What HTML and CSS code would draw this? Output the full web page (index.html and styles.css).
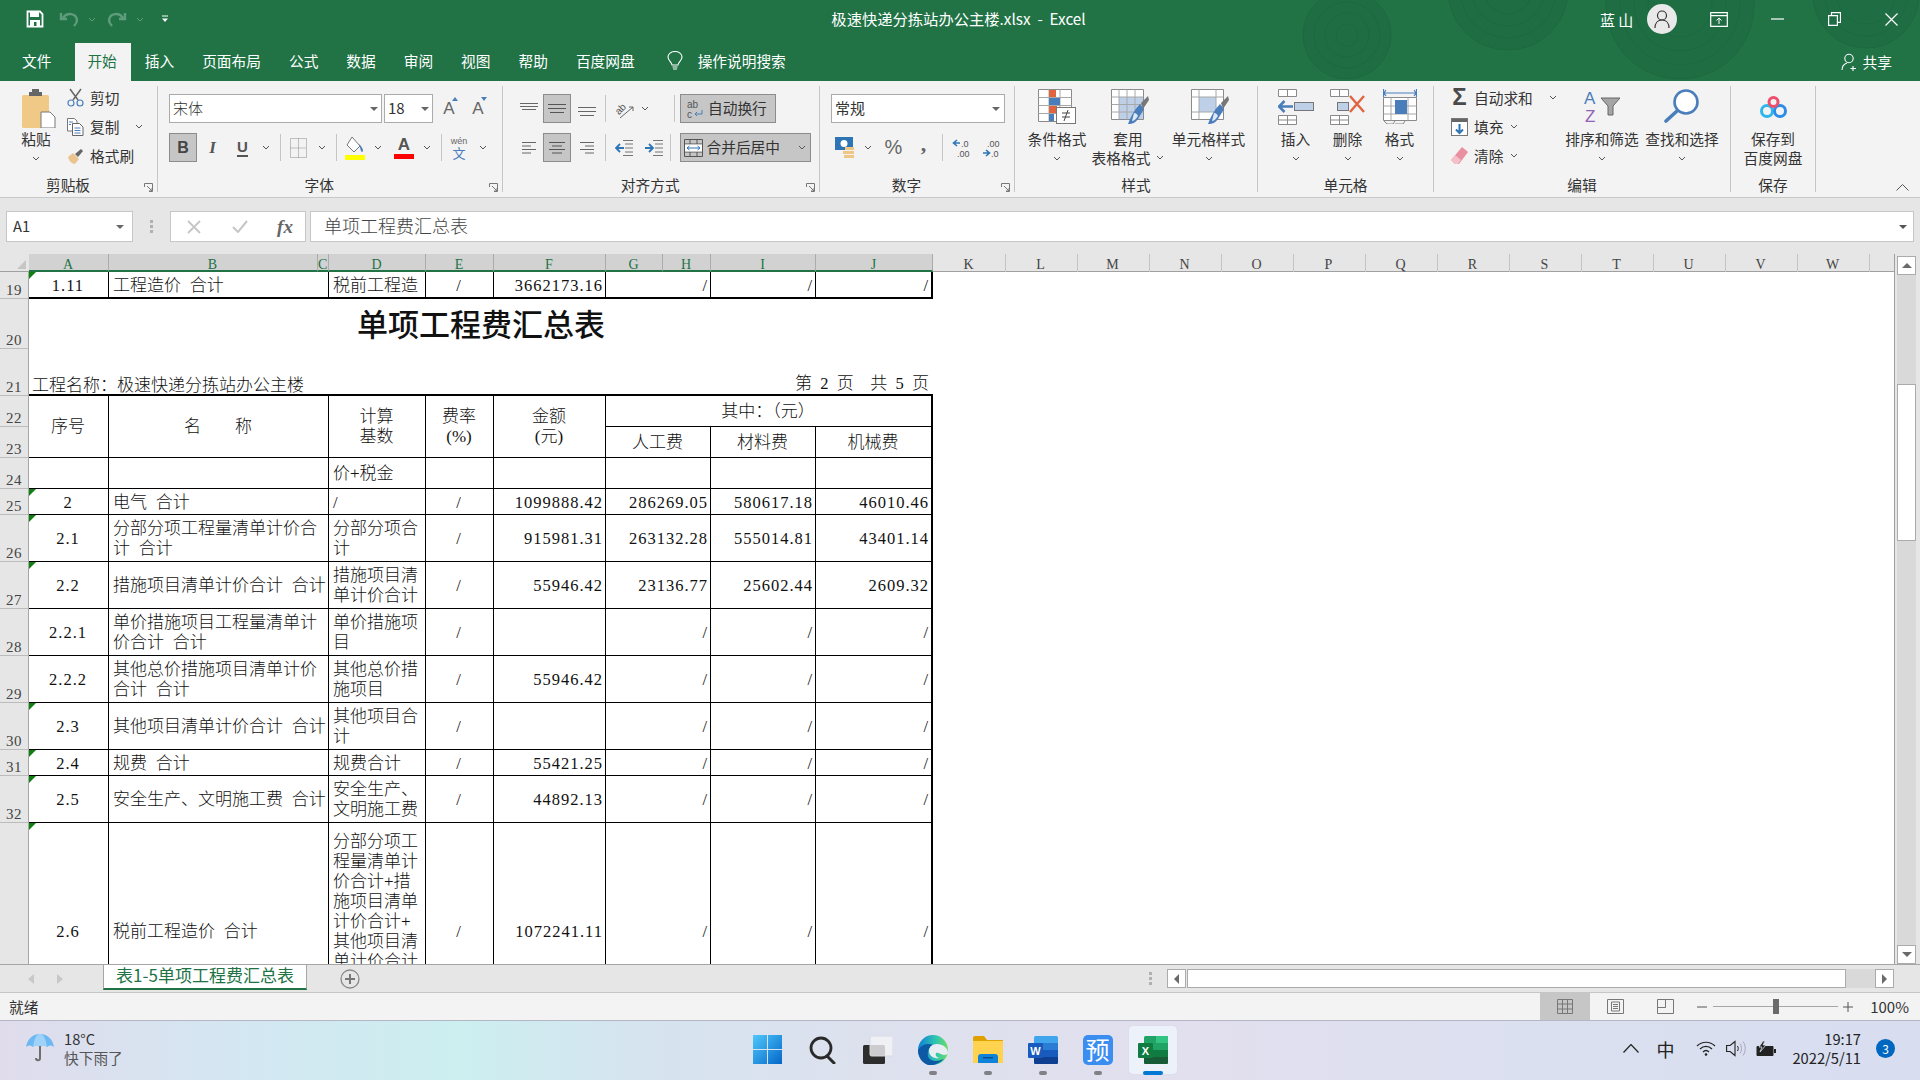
FILE: index.html
```html
<!DOCTYPE html>
<html lang="zh-CN">
<head>
<meta charset="utf-8">
<title>极速快递分拣站办公主楼.xlsx - Excel</title>
<link rel="stylesheet" href="styles.css">
</head>
<body>
<div class="app">
  <header class="head">
    <svg class="rings" viewBox="0 0 640 81" width="640" height="81">
      <g fill="#1f6e43" stroke="#1d6840">
        <circle cx="67" cy="35" r="44"/><circle cx="67" cy="35" r="33" fill="none"/><circle cx="67" cy="35" r="22" fill="none"/><circle cx="67" cy="35" r="11" fill="none"/>
        <circle cx="228" cy="-10" r="60"/><circle cx="228" cy="-10" r="48" fill="none"/><circle cx="228" cy="-10" r="36" fill="none"/><circle cx="228" cy="-10" r="24" fill="none"/>
        <circle cx="400" cy="5" r="74"/><circle cx="400" cy="5" r="60" fill="none"/><circle cx="400" cy="5" r="46" fill="none"/><circle cx="400" cy="5" r="32" fill="none"/>
        <circle cx="586" cy="-5" r="53"/><circle cx="586" cy="-5" r="41" fill="none"/><circle cx="586" cy="-5" r="29" fill="none"/>
      </g>
    </svg>
    <div class="titlebar">
      <div class="qat">
        <svg width="18" height="18" viewBox="0 0 18 18"><path d="M1.500 1.500h12.500l2.500 2.500v12.500h-15z" fill="none" stroke="#fff" stroke-width="1.800"/><rect x="4" y="2" width="9" height="5" fill="#fff"/><rect x="4" y="10" width="10" height="6" fill="#fff"/><rect x="8" y="12" width="2.500" height="4" fill="#217346"/></svg>
        <svg width="20" height="16" viewBox="0 0 20 16"><path d="M4 7c4-6 13-5 14 2 0 2-1 4-3 6M2 2v6h6" fill="none" stroke="#5e9c7c" stroke-width="2.400"/></svg>
        <svg class="chev dim" viewBox="0 0 8 5"><path d="M1 1l3 3 3-3"/></svg>
        <svg width="20" height="16" viewBox="0 0 20 16"><path d="M16 7C12 1 3 2 2 9c0 2 1 4 3 6M18 2v6h-6" fill="none" stroke="#5e9c7c" stroke-width="2.400"/></svg>
        <svg class="chev dim" viewBox="0 0 8 5"><path d="M1 1l3 3 3-3"/></svg>
        <svg width="8" height="8" viewBox="0 0 8 8"><path d="M1 1h6" stroke="#fff" stroke-width="1"/><path d="M1 3.500h6L4 7z" fill="#fff"/></svg>
      </div>
      <div class="doc">极速快递分拣站办公主楼.xlsx&nbsp; - &nbsp;Excel</div>
      <div class="winctl">
        <span class="user">蓝 山</span>
        <span class="avatar"><svg width="16" height="20" viewBox="0 0 16 20"><circle cx="8" cy="6.500" r="4.500" fill="none" stroke="#333" stroke-width="1.200"/><path d="M1 19c0-5 3-8 7-8s7 3 7 8" fill="none" stroke="#333" stroke-width="1.200"/></svg></span>
        <svg width="18" height="15" viewBox="0 0 18 15"><path d="M.7.700h16.600v13.600H.7zM.7 3.700h16.600" fill="none" stroke="#fff" stroke-width="1.200"/><path d="M9 12V6M6.500 8.500L9 6l2.500 2.500" fill="none" stroke="#fff"/></svg>
        <svg width="13" height="2" viewBox="0 0 13 2"><path d="M0 1h13" stroke="#fff" stroke-width="1.200"/></svg>
        <svg width="13" height="14" viewBox="0 0 13 14"><path d="M.6 3.600h8.800v9.800H.6zM3.500 3.600V.6h9v9.800H9.400" fill="none" stroke="#fff" stroke-width="1.200"/></svg>
        <svg width="13" height="13" viewBox="0 0 13 13"><path d="M.5.500l12 12M12.500.5l-12 12" stroke="#fff" stroke-width="1.200"/></svg>
      </div>
    </div>
    <nav class="tabs">
      <span class="tab file">文件</span>
      <span class="tab on">开始</span>
      <span class="tab">插入</span>
      <span class="tab">页面布局</span>
      <span class="tab">公式</span>
      <span class="tab">数据</span>
      <span class="tab">审阅</span>
      <span class="tab">视图</span>
      <span class="tab">帮助</span>
      <span class="tab">百度网盘</span>
      <span class="tell">
        <svg width="16" height="20" viewBox="0 0 16 20"><path d="M5 14c0-3-4-4-4-8a7 5.500 0 0 1 14 0c0 4-4 5-4 8z" fill="none" stroke="#fff" stroke-width="1.100"/><path d="M5.500 16h5M6 18h4" stroke="#fff" stroke-width="1.200"/></svg>
        操作说明搜索
      </span>
      <span class="share">
        <svg width="18" height="18" viewBox="0 0 18 18"><circle cx="8" cy="5.500" r="4.200" fill="none" stroke="#fff" stroke-width="1.100"/><path d="M1 17c0-4 2-6 5-7M12 13v5M9.500 15.500h5.500" fill="none" stroke="#fff" stroke-width="1.100"/></svg>
        共享
      </span>
    </nav>
  </header>

  <section class="ribbon">
    <div class="group g-clip launch">
      <div class="body">
        <div class="big paste">
          <div class="bi"><svg width="34" height="39" viewBox="0 0 34 39"><rect x="0" y="6" width="27" height="33" rx="1.500" fill="#f0c987"/><path d="M7 7h13V3h-3V0h-7v3H7z" fill="#666"/><path d="M19 23h9l5 5v11H19z" fill="#fff" stroke="#777"/></svg></div>
          <span>粘贴</span>
          <svg class="chev" viewBox="0 0 8 5"><path d="M1 1l3 3 3-3"/></svg>
        </div>
        <div class="smalls">
          <div class="sm"><svg width="17" height="19" viewBox="0 0 17 19"><path d="M3 1l8 11M14 1L6 12" stroke="#666" stroke-width="1.500" fill="none"/><circle cx="4" cy="15" r="3" fill="none" stroke="#4a7ebb" stroke-width="1.200"/><circle cx="13" cy="15" r="3" fill="none" stroke="#4a7ebb" stroke-width="1.200"/></svg><span>剪切</span></div>
          <div class="sm"><svg width="17" height="18" viewBox="0 0 17 18"><path d="M.5.500h7l2.500 2.500v10H.5z" fill="#fff" stroke="#777"/><path d="M5.500 5.500h7l3.500 3.500v8.500H5.500z" fill="#fff" stroke="#666"/><path d="M2 4h4M2 6.500h2M7.500 10h6M7.500 12.500h6M7.500 15h6" stroke="#4a7ebb"/></svg><span>复制</span><svg class="chev g1" viewBox="0 0 8 5"><path d="M1 1l3 3 3-3"/></svg></div>
          <div class="sm"><svg width="17" height="16" viewBox="0 0 17 16"><path d="M1 9l5-4 6 6-4 5c-3 0-6-3-7-7z" fill="#eac48c"/><path d="M8 6l6-5 2 2-5 6z" fill="#666"/></svg><span>格式刷</span></div>
        </div>
      </div>
      <div class="glabel">剪贴板</div>
      <svg class="launcher" viewBox="0 0 9 9"><path d="M.5 4V.5h8v8H5M3 3l5 5M5 8h3V5" fill="none" stroke="#777"/></svg>
    </div>

    <div class="group g-font launch">
      <div class="body rows">
        <div class="rowline">
          <div class="combo fontname"><span>宋体</span><i class="tri"></i></div>
          <div class="combo fontsize"><span>18</span><i class="tri"></i></div>
          <span class="grow up">A<i></i></span>
          <span class="grow down">A<i></i></span>
        </div>
        <div class="rowline fmt">
          <span class="ac bold">B</span>
          <span class="ic-i">I</span>
          <span class="ic-u">U</span>
          <svg class="chev" viewBox="0 0 8 5"><path d="M1 1l3 3 3-3"/></svg>
          <i class="vsep"></i>
          <svg width="17" height="20" viewBox="0 0 17 20"><path d="M.5.500h16v19H.5zM.5 10h16M8.500.5v19" fill="none" stroke="#8a8a8a" stroke-dasharray="1 1"/></svg>
          <svg class="chev" viewBox="0 0 8 5"><path d="M1 1l3 3 3-3"/></svg>
          <i class="vsep"></i>
          <svg width="20" height="24" viewBox="0 0 20 24"><path d="M7 1l8 9-6 6-7-7z" fill="#fff" stroke="#777"/><path d="M14 8c2 2 4 4 4 7 0 1-2 1-2 0z" fill="#4a7ebb"/><rect x="0" y="19" width="20" height="5" fill="#ff0"/></svg>
          <svg class="chev" viewBox="0 0 8 5"><path d="M1 1l3 3 3-3"/></svg>
          <span class="fcolor">A</span>
          <svg class="chev" viewBox="0 0 8 5"><path d="M1 1l3 3 3-3"/></svg>
          <i class="vsep"></i>
          <span class="wen"><small>wén</small><em>文</em></span>
          <svg class="chev" viewBox="0 0 8 5"><path d="M1 1l3 3 3-3"/></svg>
        </div>
      </div>
      <div class="glabel">字体</div>
      <svg class="launcher" viewBox="0 0 9 9"><path d="M.5 4V.5h8v8H5M3 3l5 5M5 8h3V5" fill="none" stroke="#777"/></svg>
    </div>

    <div class="group g-align launch">
      <div class="body rows">
        <div class="rowline al1">
          <svg width="18" height="7" viewBox="0 0 18 7"><path d="M0 .5h18M0 3.500h18M2 6.500h14" stroke="#666"/></svg>
          <span class="ac"><svg width="18" height="11" viewBox="0 0 18 11"><path d="M0 1.500h18M0 5.500h18M2 9.500h14" stroke="#555"/></svg></span>
          <svg class="lower" width="18" height="11" viewBox="0 0 18 11"><path d="M0 1.500h18M0 5.500h18M2 9.500h14" stroke="#666"/></svg>
          <i class="vsep end"></i>
          <svg width="20" height="20" viewBox="0 0 20 20"><text x="1" y="13" font-size="10" fill="#555" transform="rotate(-45 7 10)" font-family="Liberation Sans">ab</text><path d="M6 19L19 8M19 8h-4M19 8v4" fill="none" stroke="#666"/></svg>
          <svg class="chev" viewBox="0 0 8 5"><path d="M1 1l3 3 3-3"/></svg>
          <i class="vsep end"></i>
          <span class="ac wrapbtn"><svg width="16" height="20" viewBox="0 0 16 20"><text x="0" y="9" font-size="10" fill="#555" font-family="Liberation Sans">ab</text><text x="0" y="19" font-size="10" fill="#555" font-family="Liberation Sans">c</text><path d="M15 11v4H8M10 13l-2 2 2 2" fill="none" stroke="#4a7ebb"/></svg>自动换行</span>
        </div>
        <div class="rowline al2">
          <svg width="14" height="12" viewBox="0 0 14 12"><path d="M0 .5h14M0 4h9M0 7.500h14M0 11h9" stroke="#666"/></svg>
          <span class="ac"><svg width="16" height="12" viewBox="0 0 16 12"><path d="M0 .5h16M3 4h10M0 7.500h16M3 11h10" stroke="#555"/></svg></span>
          <svg width="14" height="12" viewBox="0 0 14 12"><path d="M0 .5h14M5 4h9M0 7.500h14M5 11h9" stroke="#666"/></svg>
          <i class="vsep end"></i>
          <svg width="18" height="16" viewBox="0 0 18 16"><path d="M8 .5h10M10 4h8M10 8h8M10 12h8M8 15.500h10" stroke="#777"/><path d="M9 8H1M5 4L1 8l4 4" fill="none" stroke="#2e75b6" stroke-width="1.800"/></svg>
          <svg width="18" height="16" viewBox="0 0 18 16"><path d="M8 .5h10M10 4h8M10 8h8M10 12h8M8 15.500h10" stroke="#777"/><path d="M0 8h8M4 4l4 4-4 4" fill="none" stroke="#2e75b6" stroke-width="1.800"/></svg>
          <i class="vsep end"></i>
          <span class="ac mergebtn"><svg width="19" height="18" viewBox="0 0 19 18"><path d="M.5.500h18v17H.5zM.5 5h18M.5 13h18M6 .5V5M13 .5V5M6 13v4.500M13 13v4.500" fill="none" stroke="#555"/><rect x="1" y="5.500" width="17" height="7" fill="#fff"/><path d="M3 9h13M5.500 7L3 9l2.500 2M13.500 7L16 9l-2.500 2" fill="none" stroke="#2e75b6"/></svg>合并后居中<svg class="chev m2" viewBox="0 0 8 5"><path d="M1 1l3 3 3-3"/></svg></span>
        </div>
      </div>
      <div class="glabel">对齐方式</div>
      <svg class="launcher" viewBox="0 0 9 9"><path d="M.5 4V.5h8v8H5M3 3l5 5M5 8h3V5" fill="none" stroke="#777"/></svg>
    </div>

    <div class="group g-num launch">
      <div class="body rows">
        <div class="rowline"><div class="combo numfmt"><span>常规</span><i class="tri"></i></div></div>
        <div class="rowline numrow">
          <svg width="21" height="24" viewBox="0 0 21 24"><rect x="0" y="1" width="18" height="13" fill="#2e75b6"/><circle cx="9" cy="7.500" r="3.500" fill="#fff"/><rect x="10" y="11" width="9" height="3" fill="#eec784"/><rect x="8" y="15" width="11" height="3" fill="#eec784"/><rect x="9" y="19" width="10" height="3" fill="#eec784"/></svg>
          <svg class="chev" viewBox="0 0 8 5"><path d="M1 1l3 3 3-3"/></svg>
          <span class="pct">%</span>
          <span class="comma">,</span>
          <i class="vsep"></i>
          <svg width="18" height="20" viewBox="0 0 18 20"><text x="9" y="9" font-size="9" fill="#555" font-family="Liberation Sans">.0</text><text x="5" y="19" font-size="9" fill="#555" font-family="Liberation Sans">.00</text><path d="M8 5H2M5 2L1.500 5 5 8" fill="none" stroke="#2e75b6" stroke-width="1.600"/></svg>
          <svg width="18" height="20" viewBox="0 0 18 20"><text x="5" y="9" font-size="9" fill="#555" font-family="Liberation Sans">.00</text><text x="9" y="19" font-size="9" fill="#555" font-family="Liberation Sans">.0</text><path d="M1 15h6M4 12l3.500 3L4 18" fill="none" stroke="#2e75b6" stroke-width="1.600"/></svg>
        </div>
      </div>
      <div class="glabel">数字</div>
      <svg class="launcher" viewBox="0 0 9 9"><path d="M.5 4V.5h8v8H5M3 3l5 5M5 8h3V5" fill="none" stroke="#777"/></svg>
    </div>

    <div class="group g-style">
      <div class="body">
        <div class="big b64">
          <div class="bi"><svg width="38" height="35" viewBox="0 0 38 35"><path d="M.5.500h33v32H.5z" fill="#fff" stroke="#8a8a8a"/><path d="M.5 8.500h33M.5 16.500h33M.5 24.500h33M11 .5v32M22 .5v32" stroke="#a8a8a8"/><rect x="11" y="1" width="7" height="7" fill="#e0643f"/><rect x="11" y="9" width="11" height="7" fill="#4a7ebb"/><rect x="11" y="17" width="8" height="7" fill="#e0643f"/><rect x="11" y="25" width="5" height="7" fill="#4a7ebb"/><rect x="18.500" y="18.500" width="19" height="16" fill="#fff" stroke="#777"/><path d="M24 24h8M24 28h8M30 21l-4 11" stroke="#444" fill="none"/></svg></div>
          <span>条件格式</span>
          <svg class="chev" viewBox="0 0 8 5"><path d="M1 1l3 3 3-3"/></svg>
        </div>
        <div class="big b78">
          <div class="bi nudge"><svg width="38" height="36" viewBox="0 0 38 36"><path d="M.5.500h32v30H.5z" fill="#fff" stroke="#8a8a8a"/><rect x="8" y="8" width="24" height="22" fill="#bdd0e7"/><path d="M.5 8h32M.5 15.500h32M.5 23h32M8 .5v30M16 .5v30M24 .5v30" stroke="#a8a8a8"/><path d="M30 14l7-7 1 4-6 9z" fill="#777"/><path d="M29 15l4 5-6 10c-2 3-5 5-10 5 2-6 6-14 12-20z" fill="#4a7ebb"/><path d="M23 24c2 0 3 1 4 3-2 3-4 5-6 5z" fill="#dde8f3"/></svg></div>
          <span>套用</span>
          <span class="nb">表格格式<svg class="chev m1" viewBox="0 0 8 5"><path d="M1 1l3 3 3-3"/></svg></span>
        </div>
        <div class="big b83">
          <div class="bi nudge"><svg width="38" height="36" viewBox="0 0 38 36"><path d="M.5.500h32v30H.5z" fill="#fff" stroke="#8a8a8a"/><rect x="8" y="8" width="17" height="15" fill="#bdd0e7"/><path d="M.5 8h32M.5 23h32M8 .5v30M25 .5v30" stroke="#a8a8a8"/><path d="M30 14l7-7 1 4-6 9z" fill="#777"/><path d="M29 15l4 5-6 10c-2 3-5 5-10 5 2-6 6-14 12-20z" fill="#4a7ebb"/><path d="M23 24c2 0 3 1 4 3-2 3-4 5-6 5z" fill="#dde8f3"/></svg></div>
          <span>单元格样式</span>
          <svg class="chev" viewBox="0 0 8 5"><path d="M1 1l3 3 3-3"/></svg>
        </div>
      </div>
      <div class="glabel">样式</div>
    </div>

    <div class="group g-cells">
      <div class="body">
        <div class="big b52">
          <div class="bi"><svg width="36" height="36" viewBox="0 0 36 36"><path d="M.5.500h18v7H.5zM9.500.5v7M.5 26.500h18v9H.5zM.5 31h18M9.500 26.500v9" fill="#fff" stroke="#8a8a8a"/><rect x="16.500" y="13.500" width="19" height="8" fill="#bdd0e7" stroke="#777"/><path d="M15 17.500H1M6.500 12L1 17.500 6.500 23" fill="none" stroke="#4a7ebb" stroke-width="2.600"/></svg></div>
          <span>插入</span>
          <svg class="chev" viewBox="0 0 8 5"><path d="M1 1l3 3 3-3"/></svg>
        </div>
        <div class="big b52">
          <div class="bi"><svg width="36" height="36" viewBox="0 0 36 36"><path d="M.5.500h18v7H.5zM9.500.5v7M.5 26.500h18v9H.5zM.5 31h18M9.500 26.500v9" fill="#fff" stroke="#8a8a8a"/><rect x="7.500" y="13.500" width="11" height="8" fill="#bdd0e7" stroke="#777"/><path d="M20 7l14 16M34 7L20 23" stroke="#e0643f" stroke-width="2.400"/></svg></div>
          <span>删除</span>
          <svg class="chev" viewBox="0 0 8 5"><path d="M1 1l3 3 3-3"/></svg>
        </div>
        <div class="big b52">
          <div class="bi fmtcell"><svg width="34" height="38" viewBox="0 0 34 38"><path d="M1 7h32M3 4l-2 3 2 3M31 4l2 3-2 3M.5 3v8M33.500 3v8" fill="none" stroke="#4a7ebb" stroke-width="1.200"/><path d="M.5 11.500h33v23H.5z" fill="#fff" stroke="#8a8a8a"/><path d="M.5 20h33M.5 28h33M8 11.500v23M25 11.500v23" stroke="#a8a8a8"/><rect x="12" y="14" width="12" height="14" fill="#4a7ebb"/><path d="M1 35l3 3h6l2-3M12 38h8l2-3" fill="none" stroke="#888"/></svg></div>
          <span>格式</span>
          <svg class="chev" viewBox="0 0 8 5"><path d="M1 1l3 3 3-3"/></svg>
        </div>
      </div>
      <div class="glabel">单元格</div>
    </div>

    <div class="group g-edit">
      <div class="body">
        <div class="smalls edit">
          <div class="sm"><span class="sigma">Σ</span><span>自动求和</span><svg class="chev far" viewBox="0 0 8 5"><path d="M1 1l3 3 3-3"/></svg></div>
          <div class="sm"><svg width="17" height="18" viewBox="0 0 17 18"><rect x=".5" y=".5" width="16" height="17" fill="#fff" stroke="#777"/><rect x="1" y="1" width="15" height="3" fill="#666"/><path d="M8.500 6v9M5 11.500l3.500 3.500 3.500-3.500" fill="none" stroke="#2e75b6" stroke-width="2"/></svg><span>填充</span><svg class="chev near" viewBox="0 0 8 5"><path d="M1 1l3 3 3-3"/></svg></div>
          <div class="sm"><svg width="17" height="17" viewBox="0 0 17 17"><path d="M11 0l6 5-9 12H4L0 13z" fill="#e98f9f"/><path d="M0 13l4-5 6 5-3 4H4z" fill="#f3c0c9"/></svg><span>清除</span><svg class="chev near" viewBox="0 0 8 5"><path d="M1 1l3 3 3-3"/></svg></div>
        </div>
        <div class="big b76">
          <div class="bi"><svg width="36" height="36" viewBox="0 0 36 36"><text x="0" y="15" font-size="17" font-family="Liberation Sans" fill="#4a7ebb">A</text><text x="1" y="33" font-size="17" font-family="Liberation Sans" fill="#8f63b5">Z</text><path d="M17 9h19l-7 8v9h-5v-9z" fill="#a5a5a5" stroke="#666"/></svg></div>
          <span>排序和筛选</span>
          <svg class="chev" viewBox="0 0 8 5"><path d="M1 1l3 3 3-3"/></svg>
        </div>
        <div class="big b80">
          <div class="bi"><svg width="36" height="34" viewBox="0 0 36 34"><circle cx="22" cy="13" r="11.500" fill="#fff" stroke="#4a7ebb" stroke-width="2.600"/><path d="M13 22L2 32" stroke="#4a7ebb" stroke-width="3.600" stroke-linecap="round"/></svg></div>
          <span>查找和选择</span>
          <svg class="chev" viewBox="0 0 8 5"><path d="M1 1l3 3 3-3"/></svg>
        </div>
      </div>
      <div class="glabel">编辑</div>
    </div>

    <div class="group g-save">
      <div class="body">
        <div class="big b85">
          <div class="bi bd"><svg width="27" height="22" viewBox="0 0 27 22"><circle cx="7" cy="15" r="5.500" fill="none" stroke="#2fb6ec" stroke-width="3"/><circle cx="20" cy="15" r="5.500" fill="none" stroke="#2c8de8" stroke-width="3"/><circle cx="13.500" cy="6" r="4.500" fill="none" stroke="#ef4f6b" stroke-width="3"/></svg></div>
          <span>保存到</span>
          <span>百度网盘</span>
        </div>
      </div>
      <div class="glabel">保存</div>
    </div>
    <svg class="collapse" width="13" height="7" viewBox="0 0 13 7"><path d="M.5 6.500l6-6 6 6" fill="none" stroke="#555"/></svg>
  </section>

  <section class="fbar">
    <div class="namebox"><span>A1</span><i class="tri"></i></div>
    <div class="fdots"><i></i><i></i><i></i></div>
    <div class="fxbox">
      <svg width="14" height="14" viewBox="0 0 14 14"><path d="M1 1l12 12M13 1L1 13" stroke="#c6c6c6" stroke-width="1.800"/></svg>
      <svg width="16" height="13" viewBox="0 0 16 13"><path d="M1 7l5 5L15 1" fill="none" stroke="#c6c6c6" stroke-width="2"/></svg>
      <span class="fx">fx</span>
    </div>
    <div class="finput"><span>单项工程费汇总表</span><i class="tri dark"></i></div>
  </section>

  <section class="sheet">
    <div class="sheetmain">
      <div class="colhead">
        <div class="corner"></div>
        <span class="ch sel wA">A</span><span class="ch sel wB">B</span><span class="ch sel wC">C</span><span class="ch sel wD">D</span><span class="ch sel wE">E</span><span class="ch sel wF">F</span><span class="ch sel wG">G</span><span class="ch sel wH">H</span><span class="ch sel wI">I</span><span class="ch sel wJ">J</span><span class="ch">K</span><span class="ch">L</span><span class="ch">M</span><span class="ch">N</span><span class="ch">O</span><span class="ch">P</span><span class="ch">Q</span><span class="ch">R</span><span class="ch">S</span><span class="ch">T</span><span class="ch">U</span><span class="ch">V</span><span class="ch">W</span>
      </div>
      <div class="cells">
        <div class="rh">19</div><div class="c n ctr mark thick">1.11</div><div class="c thick">工程造价 合计</div><div class="c thick">税前工程造</div><div class="c n ctr thick">/</div><div class="c n r thick">3662173.16</div><div class="c n r thick">/</div><div class="c n r thick">/</div><div class="c n r thick last">/</div>

        <div class="rh">20</div><div class="title">单项工程费汇总表</div>

        <div class="rh">21</div><div class="pagehead"><span>工程名称&#xFF1A;极速快递分拣站办公主楼</span><span class="pg">第 <b>2</b> 页 &nbsp;共 <b>5</b> 页</span></div>

        <div class="rh">22</div><div class="c ctr rs2">序号</div><div class="c ctr rs2 nm">名 称</div><div class="c ctr rs2">计算<br>基数</div><div class="c ctr rs2">费率<br>(%)</div><div class="c ctr rs2">金额<br>(元)</div><div class="c ctr cs3 last">其中&#xFF1A;&#xFF08;元&#xFF09;</div>
        <div class="rh">23</div><div class="c ctr">人工费</div><div class="c ctr">材料费</div><div class="c ctr last">机械费</div>

        <div class="rh">24</div><div class="c"></div><div class="c"></div><div class="c">价+税金</div><div class="c"></div><div class="c"></div><div class="c"></div><div class="c"></div><div class="c last"></div>

        <div class="rh">25</div><div class="c n ctr mark">2</div><div class="c">电气 合计</div><div class="c n">/</div><div class="c n ctr">/</div><div class="c n r">1099888.42</div><div class="c n r">286269.05</div><div class="c n r">580617.18</div><div class="c n r last">46010.46</div>

        <div class="rh">26</div><div class="c n ctr mark">2.1</div><div class="c">分部分项工程量清单计价合<br>计 合计</div><div class="c">分部分项合<br>计</div><div class="c n ctr">/</div><div class="c n r">915981.31</div><div class="c n r">263132.28</div><div class="c n r">555014.81</div><div class="c n r last">43401.14</div>

        <div class="rh">27</div><div class="c n ctr mark">2.2</div><div class="c">措施项目清单计价合计 合计</div><div class="c">措施项目清<br>单计价合计</div><div class="c n ctr">/</div><div class="c n r">55946.42</div><div class="c n r">23136.77</div><div class="c n r">25602.44</div><div class="c n r last">2609.32</div>

        <div class="rh">28</div><div class="c n ctr">2.2.1</div><div class="c">单价措施项目工程量清单计<br>价合计 合计</div><div class="c">单价措施项<br>目</div><div class="c n ctr">/</div><div class="c n r"></div><div class="c n r">/</div><div class="c n r">/</div><div class="c n r last">/</div>

        <div class="rh">29</div><div class="c n ctr">2.2.2</div><div class="c">其他总价措施项目清单计价<br>合计 合计</div><div class="c">其他总价措<br>施项目</div><div class="c n ctr">/</div><div class="c n r">55946.42</div><div class="c n r">/</div><div class="c n r">/</div><div class="c n r last">/</div>

        <div class="rh">30</div><div class="c n ctr mark">2.3</div><div class="c">其他项目清单计价合计 合计</div><div class="c">其他项目合<br>计</div><div class="c n ctr">/</div><div class="c n r"></div><div class="c n r">/</div><div class="c n r">/</div><div class="c n r last">/</div>

        <div class="rh">31</div><div class="c n ctr mark">2.4</div><div class="c">规费 合计</div><div class="c">规费合计</div><div class="c n ctr">/</div><div class="c n r">55421.25</div><div class="c n r">/</div><div class="c n r">/</div><div class="c n r last">/</div>

        <div class="rh">32</div><div class="c n ctr mark">2.5</div><div class="c">安全生产、文明施工费 合计</div><div class="c">安全生产、<br>文明施工费</div><div class="c n ctr">/</div><div class="c n r">44892.13</div><div class="c n r">/</div><div class="c n r">/</div><div class="c n r last">/</div>

        <div class="rh">33</div><div class="c n ctr mark">2.6</div><div class="c">税前工程造价 合计</div><div class="c top">分部分项工<br>程量清单计<br>价合计+措<br>施项目清单<br>计价合计+<br>其他项目清<br>单计价合计</div><div class="c n ctr">/</div><div class="c n r">1072241.11</div><div class="c n r">/</div><div class="c n r">/</div><div class="c n r last">/</div>
      </div>
    </div>
    <div class="vscroll">
      <div class="sbtn"><i class="up"></i></div>
      <div class="vtrack"><div class="vthumb"></div></div>
      <div class="sbtn"><i class="dn"></i></div>
    </div>
  </section>

  <section class="tabbar">
    <div class="tabnav">
      <svg width="6" height="10" viewBox="0 0 6 10"><path d="M6 0v10L0 5z" fill="#c8c8c8"/></svg>
      <svg width="6" height="10" viewBox="0 0 6 10"><path d="M0 0v10l6-5z" fill="#c8c8c8"/></svg>
    </div>
    <div class="sheettab">表1-5单项工程费汇总表</div>
    <svg class="addsheet" width="20" height="20" viewBox="0 0 20 20"><circle cx="10" cy="10" r="9" fill="none" stroke="#8a8a8a" stroke-width="1.300"/><path d="M10 5v10M5 10h10" stroke="#777" stroke-width="2"/></svg>
    <div class="hdots"><i></i><i></i><i></i></div>
    <div class="hscroll">
      <div class="hbtn"><i class="lf"></i></div>
      <div class="hthumb"></div>
      <div class="htrack"></div>
      <div class="hbtn"><i class="rt"></i></div>
    </div>
  </section>

  <footer class="status">
    <span>就绪</span>
    <div class="statusr">
      <span class="vw on"><svg width="16" height="15" viewBox="0 0 16 15"><path d="M.5.500h15v14H.5zM.5 5h15M.5 10h15M5.500.5v14M10.500.5v14" fill="none" stroke="#777"/></svg></span>
      <span class="vw"><svg width="17" height="15" viewBox="0 0 17 15"><path d="M.5.500h16v14H.5z" fill="none" stroke="#777"/><path d="M4.500 3h8v9h-8zM6 5.500h5M6 7.500h5M6 9.500h5" fill="none" stroke="#777"/></svg></span>
      <span class="vw"><svg width="17" height="15" viewBox="0 0 17 15"><path d="M.5.500h16v14H.5zM.5 8.500h8V.5M8.500 8.500V.5" fill="none" stroke="#777"/></svg></span>
      <svg width="10" height="2" viewBox="0 0 10 2"><path d="M0 1h10" stroke="#555"/></svg>
      <div class="slider"><i></i></div>
      <svg width="10" height="10" viewBox="0 0 10 10"><path d="M0 5h10M5 0v10" stroke="#555"/></svg>
      <span class="zoomtxt">100%</span>
    </div>
  </footer>

  <footer class="taskbar">
    <div class="weather">
      <svg width="28" height="29" viewBox="0 0 28 29"><path d="M14 1C6 1 1 7 0 14c3-2 5-2 7 0 2-2 5-2 7 0 2-2 5-2 7 0 2-2 4-2 7 0C27 7 22 1 14 1z" fill="#6cb8f2"/><path d="M14 1c-4 0-6 6-7 13 2-2 5-2 7 0 2-2 5-2 7 0-1-7-3-13-7-13z" fill="#9fd2f8"/><path d="M14 13v12c0 3-4 3-4 0" fill="none" stroke="#6e6e6e" stroke-width="2"/></svg>
      <div class="wtxt"><span>18°C</span><span class="wsub">快下雨了</span></div>
    </div>
    <div class="tasks">
      <div class="task"><svg width="29" height="29" viewBox="0 0 29 29"><defs><linearGradient id="wg" x1="0" y1="0" x2="1" y2="1"><stop offset="0" stop-color="#4fc8fb"/><stop offset="1" stop-color="#0467c9"/></linearGradient></defs><path d="M0 0h14v14H0zM15 0h14v14H15zM0 15h14v14H0zM15 15h14v14H15z" fill="url(#wg)"/></svg></div>
      <div class="task"><svg width="27" height="28" viewBox="0 0 27 28"><circle cx="12" cy="12" r="10" fill="none" stroke="#2a2a2a" stroke-width="2.800"/><path d="M18 20l7 7" stroke="#2a2a2a" stroke-width="3" stroke-linecap="round"/></svg></div>
      <div class="task"><svg width="30" height="28" viewBox="0 0 30 28"><rect x="0" y="9" width="22" height="19" rx="1.500" fill="#2d2d2d"/><rect x="7" y="0" width="23" height="20" rx="1.500" fill="#f4f4f6" fill-opacity=".8" stroke="#d9d9df"/></svg></div>
      <div class="task dot"><svg width="30" height="30" viewBox="0 0 30 30"><defs><linearGradient id="eg" x1="0" y1="0" x2="1" y2="0"><stop offset="0" stop-color="#0f7fd8"/><stop offset=".6" stop-color="#30c6b0"/><stop offset="1" stop-color="#6fdc64"/></linearGradient></defs><circle cx="15" cy="15" r="15" fill="url(#eg)"/><path d="M10 30C4 28 0 22 0 15 4 9 10 8 15 10c-4 2-6 6-5 11 1 4 6 7 16 3-4 4-10 7-16 6z" fill="#0c59a4"/><path d="M30 18c0-5-5-9-11-9-5 0-8 3-8 7 0 5 5 8 10 7-3-1-4-3-3-5 2-1 5 2 8 2 2 0 4-1 4-2z" fill="#e8edf3"/></svg></div>
      <div class="task dot"><svg width="30" height="27" viewBox="0 0 30 27"><path d="M0 2a2 2 0 0 1 2-2h9l3 4h16v4H0z" fill="#dfa000"/><rect x="0" y="4" width="30" height="23" fill="#ffd24f"/><rect x="0" y="4" width="30" height="1" fill="#e0a500"/><path d="M5 27v-6a3 3 0 0 1 3-3h14a3 3 0 0 1 3 3v6z" fill="#0f83d8"/><rect x="10" y="21" width="10" height="1.500" fill="#0a4f90"/></svg></div>
      <div class="task dot"><svg width="30" height="28" viewBox="0 0 30 28"><rect x="6" y="0" width="24" height="28" rx="1.500" fill="#41a5ee"/><rect x="6" y="7" width="24" height="7" fill="#2b7cd3"/><rect x="6" y="14" width="24" height="7" fill="#185abd"/><path d="M6 21h24v5.500a1.500 1.500 0 0 1-1.500 1.500h-21A1.500 1.500 0 0 1 6 26.500z" fill="#103f91"/><rect x="0" y="7" width="15" height="15" rx="1" fill="#185abd"/><text x="7.500" y="19" font-size="11" font-weight="700" text-anchor="middle" fill="#fff" font-family="Liberation Sans">W</text></svg></div>
      <div class="task dot"><span class="yu">预</span></div>
      <div class="task active"><svg width="30" height="28" viewBox="0 0 30 28"><rect x="6" y="0" width="24" height="28" rx="1.500" fill="#21a366"/><rect x="18" y="0" width="12" height="7" fill="#33c481"/><rect x="6" y="14" width="24" height="7" fill="#107c41"/><path d="M6 21h24v5.500a1.500 1.500 0 0 1-1.500 1.500h-21A1.500 1.500 0 0 1 6 26.500z" fill="#185c37"/><rect x="0" y="7" width="15" height="15" rx="1" fill="#107c41"/><text x="7.500" y="19" font-size="11" font-weight="700" text-anchor="middle" fill="#fff" font-family="Liberation Sans">X</text></svg></div>
    </div>
    <div class="tray">
      <svg width="16" height="9" viewBox="0 0 16 9"><path d="M.5 8.500l7.500-8 7.500 8" fill="none" stroke="#222" stroke-width="1.200"/></svg>
      <span class="ime">中</span>
      <svg width="20" height="15" viewBox="0 0 20 15"><path d="M1 5c5-5 13-5 18 0M4 8c3.500-3.500 8.500-3.500 12 0M7 11c2-2 4-2 6 0" fill="none" stroke="#222" stroke-width="1.200"/><circle cx="10" cy="13.500" r="1.300" fill="#222"/></svg>
      <svg width="20" height="17" viewBox="0 0 20 17"><path d="M.6 5.500h3.500L9 1.500v14l-4.900-4H.6z" fill="none" stroke="#222" stroke-width="1.100"/><path d="M11.500 6c1 1.500 1 3.500 0 5" fill="none" stroke="#222"/><path d="M14 3.500c2 3 2 7 0 10M17 1.500c3 4 3 10 0 14" fill="none" stroke="#a6a8b8"/></svg>
      <svg width="20" height="16" viewBox="0 0 20 16"><path d="M1 5.500h16v9H1z" fill="#222" stroke="#222"/><rect x="18" y="8" width="2" height="4" fill="#222"/><path d="M7 0L3 6h3l-2 5 6-7H7l2-4z" fill="#222" stroke="#dbe0ef" stroke-width=".8"/></svg>
      <div class="clock"><span>19:17</span><span>2022/5/11</span></div>
      <span class="badge">3</span>
    </div>
  </footer>
</div>
</body>
</html>
```
FILE: styles.css
```css
* { box-sizing: border-box; }
html, body { margin: 0; padding: 0; }
body { font-family: "Noto Sans CJK SC", "Liberation Sans", sans-serif; font-size: 14.7px; color: #333; background: #f3f3f3; overflow: hidden; }
svg { display: block; flex: none; }
i, em { display: block; font-style: normal; }
.app { width: 1920px; height: 1080px; display: flex; flex-direction: column; overflow: hidden; }

/* head */
.head { position: relative; height: 81px; background: #217346; color: #fff; flex: none; }
.rings { position: absolute; right: 0; top: 0; }
.titlebar { position: relative; height: 43px; display: grid; grid-template-columns: 1fr auto 1fr; padding-bottom: 5px; align-items: center; }
.qat { display: grid; grid-template-columns: 34px 34px 12px 38px 8px 42px; place-items: center; justify-self: start; padding-left: 18px; }
.doc { font-size: 15.3px; line-height: 20px; padding: 0 3px 2px 0; }
.winctl { display: grid; grid-template-columns: 40px 44px 70px 46px 68px 46px; place-items: center; justify-self: end; padding-right: 6px; }
.user { justify-self: start; font-size: 15px; }
.avatar { width: 30px; height: 30px; border-radius: 50%; background: #e9e9e9; display: flex; align-items: center; justify-content: center; }
.tabs { position: relative; height: 38px; display: flex; align-items: stretch; padding-left: 8px; line-height: 36px; font-size: 14.7px; }
.tab { padding: 0 14px; }
.tab.file { margin-right: 8px; }
.tab.on { background: #f3f3f3; color: #217346; margin-left: 2px; padding-left: 12px; }
.tell { display: flex; align-items: center; gap: 15px; margin-left: 18px; padding-bottom: 2px; }
.share { display: flex; align-items: center; gap: 4px; margin-left: auto; padding-right: 28px; }

/* ribbon */
.ribbon { flex: none; height: 117px; background: #f3f3f3; border-bottom: 1px solid #c8c8c8; display: flex; padding-top: 5px; line-height: 19px; }
.group { position: relative; height: 106px; border-right: 1px solid #c6c6c6; display: flex; flex-direction: column; flex: none; }
.body { height: 94px; display: flex; }
.glabel { height: 12px; line-height: 10px; text-align: center; white-space: nowrap; }
.launch .glabel { padding-right: 21px; }
.launcher { position: absolute; right: 4px; bottom: 0; width: 9px; height: 9px; }
.g-clip { width: 158px; }
.g-font { width: 344.5px; }
.g-align { width: 317.5px; }
.g-num { width: 195px; }
.g-style { width: 243px; }
.g-cells { width: 176px; }
.g-edit { width: 297px; }
.g-save { width: 85px; }
.collapse { margin: 98px 0 0 80px; }

.chev { width: 8px; height: 5px; fill: none; stroke: #555; stroke-width: 1; }
.chev.dim { stroke: #5e9c7c; }
.big { display: flex; flex-direction: column; align-items: center; padding-top: 3px; white-space: nowrap; }
.bi { height: 40px; display: block; }
.big > .chev { margin-top: 8px; }
.paste { width: 56px; margin-left: 8px; }
.paste .bi { padding-left: 6px; }
.nudge { padding-left: 3px; }
.b64 { width: 64px; margin-left: 10px; }
.b78 { width: 78px; }
.b83 { width: 83px; }
.b52 { width: 52px; }
.b76 { width: 76px; }
.b80 { width: 80px; margin-left: 2px; }
.b85 { width: 85px; }
.g-cells .body { padding-left: 11.5px; }
.nb { display: flex; align-items: center; }
.m1 { margin-left: 6px; }
.fmtcell { margin-top: -3px; height: 43px; }
.bd { padding-top: 7px; }
.smalls { display: flex; flex-direction: column; gap: 5px; margin-left: 3px; margin-top: -1px; }
.sm { height: 24px; display: flex; align-items: center; gap: 6px; white-space: nowrap; }
.sm svg { margin-top: 1px; }
.g1 { margin-left: 10px; }
.edit { width: 113px; margin-left: 17px; }
.edit .far { margin-left: 10px; }
.edit .near { margin-left: 1px; }
.sigma { width: 17px; font: 700 24px/24px "Liberation Sans", sans-serif; color: #4a4a4a; text-align: center; }

.rows { flex-direction: column; gap: 10px; padding-top: 8px; }
.rowline { height: 29px; display: flex; align-items: center; }
.g-font .rows { padding-left: 11px; }
.g-align .rows { padding-left: 12.5px; }
.g-num .rows { padding-left: 11px; }
.combo { height: 29px; background: #fff; border: 1px solid #ababab; display: flex; align-items: center; justify-content: space-between; padding: 0 3px 2px; font-family: "Noto Sans CJK SC", sans-serif; }
.combo .tri { margin-top: 2px; }
.tri { width: 0; height: 0; border-left: 4px solid transparent; border-right: 4px solid transparent; border-top: 4px solid #666; }
.fontname { width: 213px; margin-right: 2px; font-weight: 300; font-size: 15px; }
.fontsize { width: 49px; font-size: 15px; }
.grow { position: relative; width: 14px; font-family: "Liberation Sans", sans-serif; font-size: 17px; color: #666; text-align: center; line-height: 17px; margin-left: 9px; }
.grow.down { margin-left: 15px; }
.grow i { position: absolute; right: -2px; top: -3px; width: 0; height: 0; border-left: 3px solid transparent; border-right: 3px solid transparent; }
.grow.up i { border-bottom: 4px solid #4a7ebb; }
.grow.down i { border-top: 4px solid #4a7ebb; }
.fmt { display: grid; grid-template-columns: 28px 31px 29px 18px 10px 27px 20px 8px 29px 17px 36px 9px 20px 16px 32px; place-items: center; }
.vsep { width: 1px; height: 27px; background: #c6c6c6; }
.vsep.end { justify-self: end; }
.ac { background: #c6c6c6; border: 1px solid #8c8c8c; height: 29px; display: flex; align-items: center; justify-content: center; }
.bold { width: 28px; font: 700 16px "Liberation Sans", sans-serif; color: #444; }
.ic-i { font: italic 700 17px "Liberation Serif", serif; color: #555; }
.ic-u { font: 700 15px "Liberation Sans", sans-serif; color: #555; border-bottom: 2px solid #555; line-height: 15px; padding-bottom: 1px; }
.fcolor { width: 20px; font: 700 17px/18px "Liberation Sans", sans-serif; color: #555; text-align: center; border-bottom: 5px solid #f00; }
.wen { display: flex; flex-direction: column; align-items: center; width: 16px; color: #4a7ebb; }
.wen small { font: 9px/10px "Liberation Sans", sans-serif; color: #666; }
.wen em { font-size: 13px; line-height: 14px; }

.al1 { display: grid; grid-template-columns: 28px 27.500px 33px 3px 34.500px 7.500px 26px 101.500px 35px; place-items: center; }
.al2 { display: grid; grid-template-columns: 28px 27.500px 33px 3px 34.500px 25px 8px 136.500px; place-items: center; }
.al1 .vsep:nth-of-type(1), .al2 .vsep { justify-self: center; }
.al1 .ac:not(.wrapbtn), .al2 .ac:not(.mergebtn) { width: 27.5px; }
.lower { margin-top: 5px; }
.al1 > svg:first-child { margin-top: -5px; }
.wrapbtn { justify-self: end; width: 96px; gap: 5px; justify-content: flex-start; padding: 0 0 2px 6px; }
.wrapbtn svg { margin-top: 2px; }
.mergebtn { justify-self: end; width: 131px; gap: 4px; justify-content: flex-start; padding: 0 0 2px 3px; }
.mergebtn > svg:first-child, .m2 { margin-top: 2px; }
.m2 { margin-left: 14px; }
.numfmt { width: 173.500px; padding-left: 3px; padding-right: 4px; font-size: 15px; }
.numrow { display: grid; grid-template-columns: 28px 18px 33px 27px 11px 26px 34px; place-items: center; }
.pct { font: 20px "Liberation Sans", sans-serif; color: #666; }
.comma { font: 700 22px/20px "Liberation Serif", serif; color: #666; margin-top: -8px; }

/* formula bar */
.fbar { flex: none; height: 56px; background: #e6e6e6; display: flex; padding: 13px 6px 12px; align-items: stretch; }
.namebox { width: 127px; background: #fff; border: 1px solid #c6c6c6; display: flex; align-items: center; justify-content: space-between; padding: 0 8px 3px 6px; }
.namebox .tri { margin-top: 3px; }
.fdots { width: 37px; display: flex; flex-direction: column; align-items: center; justify-content: center; gap: 2px; }
.fdots i { width: 3px; height: 3px; background: #b0b0b0; }
.fxbox { width: 136px; background: #fff; border: 1px solid #c6c6c6; display: grid; grid-template-columns: 46px 46px 44px; place-items: center; }
.fx { font: italic 700 19px "Liberation Serif", serif; color: #666; }
.finput { margin-left: 4px; flex: 1; background: #fff; border: 1px solid #c6c6c6; display: flex; align-items: center; justify-content: space-between; padding: 0 6px 4px 13px; font-size: 18px; color: #444; font-weight: 300; }
.dark { border-top-color: #555; margin-top: 4px; }

/* sheet */
.sheet { flex: none; height: 710px; background: #e6e6e6; display: flex; overflow: hidden; }
.sheetmain { width: 1895px; overflow: hidden; border-right: 1px solid #a0a0a0; background: #fff; }
.colhead { height: 18px; display: flex; background: #e6e6e6; box-shadow: inset 0 -1px 0 #a0a0a0; font: 14px/21px "Liberation Serif", serif; }
.corner { width: 29px; flex: none; position: relative; }
.corner::after { content: ""; position: absolute; right: 3px; bottom: 3px; border-left: 9px solid transparent; border-bottom: 9px solid #c6c6c6; }
.ch { width: 72px; flex: none; text-align: center; border-right: 1px solid #c4c4c4; color: #444; overflow: hidden; padding-right: 2px; }
.ch.sel { background: #d2d2d2; color: #217346; border-right-color: #ababab; border-bottom: 2px solid #217346; padding-right: 1px; }
.wA { width: 80px; } .wB { width: 209px; } .wC { width: 11px; padding-right: 0; } .wD { width: 97px; } .wE { width: 68px; } .wF { width: 112px; } .wG { width: 57px; } .wH { width: 48px; } .wI { width: 105px; } .wJ { width: 117px; margin-right: 1px; }

.cells { display: grid; grid-template-columns: 29px 80px 220px 97px 68px 112px 105px 105px 117px; grid-template-rows: 27px 50px 47px 31px 31px 31px 26px 47px 47px 47px 47px 47px 26px 47px 216px; width: 933px; font: 300 17px/20px "Liberation Serif", "Noto Sans CJK SC", sans-serif; color: #111; }
.rh { background: #e6e6e6; border-right: 1px solid #a6a6a6; border-bottom: 1px solid #bcbcbc; font: 15px/15px "Liberation Serif", serif; letter-spacing: .6px; color: #444; display: flex; align-items: flex-end; padding-left: 6px; }
.c { position: relative; display: flex; flex-direction: column; justify-content: center; border-right: 1px solid #000; border-bottom: 1px solid #000; padding: 2px 1px 0 4px; white-space: nowrap; word-spacing: 4.5px; min-width: 0; }
.n { font: 400 16.5px/20px "Liberation Serif", serif; letter-spacing: 1px; }
.ctr { text-align: center; padding-left: 1px; padding-right: 2px; }
.r { text-align: right; padding-right: 2px; }
.thick { border-bottom-width: 2px; }
.last { border-right-width: 2px; }
.rs2 { grid-row: span 2; padding-top: 0; }
.cs3 { grid-column: span 3; }
.nm { word-spacing: 30px; }
.top { justify-content: flex-start; padding-top: 9px; }
.mark::before { content: ""; position: absolute; left: 0; top: 0; border-top: 7px solid #0f7f12; border-right: 7px solid transparent; }
.title { grid-column: span 8; font-size: 31px; font-weight: 500; text-align: center; line-height: 53px; }
.pagehead { grid-column: span 8; display: flex; justify-content: space-between; align-items: flex-end; border-bottom: 2px solid #000; padding: 0 4px 0 3px; line-height: 16px; }
.pg { word-spacing: 4px; }
.pg b { font: 400 16.5px "Liberation Serif", serif; }

.vscroll { width: 24px; padding-left: 2px; display: flex; flex-direction: column; padding-top: 2px; }
.sbtn { width: 19px; height: 19px; flex: none; background: #fff; border: 1px solid #ababab; display: flex; align-items: center; justify-content: center; }
.sbtn .up { border-left: 5px solid transparent; border-right: 5px solid transparent; border-bottom: 5px solid #6a6a6a; }
.sbtn .dn { border-left: 5px solid transparent; border-right: 5px solid transparent; border-top: 5px solid #6a6a6a; }
.vtrack { flex: 1; width: 19px; background: #d9d9d9; padding-top: 109px; }
.vthumb { height: 157px; background: #fff; border: 1px solid #ababab; }

/* tab bar */
.tabbar { flex: none; height: 29px; background: #e6e6e6; border-top: 1px solid #a6a6a6; border-bottom: 1px solid #c6c6c6; display: flex; align-items: flex-start; }
.tabnav { width: 103px; display: flex; gap: 23px; padding: 9px 0 0 28px; }
.sheettab { width: 204px; height: 25px; background: #fff; border-bottom: 2px solid #217346; border-left: 1px solid #a6a6a6; border-right: 1px solid #a6a6a6; color: #217346; font-size: 17px; line-height: 20px; text-align: center; white-space: nowrap; }
.addsheet { margin: 4px 0 0 33px; }
.hdots { margin-left: auto; padding-top: 7px; display: flex; flex-direction: column; gap: 2px; margin-right: 15px; }
.hdots i { width: 3px; height: 3px; background: #b0b0b0; }
.hscroll { display: flex; width: 727px; height: 19px; margin: 4px 26px 0 0; }
.hbtn { width: 19px; height: 19px; flex: none; background: #fff; border: 1px solid #ababab; display: flex; align-items: center; justify-content: center; }
.hbtn .lf { border-top: 5px solid transparent; border-bottom: 5px solid transparent; border-right: 5px solid #6a6a6a; }
.hbtn .rt { border-top: 5px solid transparent; border-bottom: 5px solid transparent; border-left: 5px solid #6a6a6a; }
.hthumb { width: 659px; margin-left: 1px; background: #fff; border: 1px solid #ababab; }
.htrack { flex: 1; background: #d9d9d9; }

/* status */
.status { flex: none; height: 27px; background: #f3f3f3; display: flex; justify-content: space-between; align-items: center; padding-left: 9px; }
.statusr { display: grid; grid-template-columns: 50px 50px 50px 23px 125px 20px 51px; place-items: center; padding-right: 11px; height: 27px; }
.vw { width: 50px; height: 27px; display: flex; align-items: center; justify-content: center; }
.vw.on { background: #c6c6c6; }
.slider { position: relative; width: 125px; height: 1px; background: #a6a6a6; }
.slider i { position: absolute; left: 60px; top: -7px; width: 6px; height: 15px; background: #6a6a6a; }
.zoomtxt { justify-self: end; font-size: 15px; }

/* taskbar */
.taskbar { flex: none; height: 60px; display: flex; border-top: 1px solid #b4b6c4; background: linear-gradient(90deg, #e0dcec 0%, #d4e6f2 12%, #cceff0 24%, #d5e4ef 33%, #dde1ee 45%, #e2dfee 62%, #dbe0f0 80%, #d8def0 100%); }
.weather { width: 740px; display: flex; align-items: center; gap: 10px; padding: 0 0 6px 26px; }
.wtxt { display: flex; flex-direction: column; line-height: 19px; font-size: 14.700px; }
.wsub { color: #555; }
.tasks { display: flex; width: 440px; }
.task { position: relative; width: 55px; height: 59px; display: flex; align-items: center; justify-content: center; padding-bottom: 2px; }
.task.dot::after { content: ""; position: absolute; left: 23.500px; bottom: 5px; width: 8px; height: 4px; border-radius: 2px; background: #808085; }
.task.active::before { content: ""; position: absolute; left: 3.500px; top: 5px; width: 48px; height: 48px; border-radius: 4px; background: #edf1fa; box-shadow: 0 0 1px #c4c8d8; }
.task.active svg { position: relative; }
.task.active::after { content: ""; position: absolute; left: 18px; bottom: 5px; width: 20px; height: 4px; border-radius: 2px; background: #0078d4; }
.yu { width: 30px; height: 30px; border-radius: 5px; background: #3b8df0; color: #fff; font-size: 24px; line-height: 28px; text-align: center; }
.tray { margin-left: auto; width: 305px; display: grid; grid-template-columns: 32px 37px 44px 16px 44px 73px 49px; place-items: center; justify-content: start; color: #222; padding-bottom: 4px; }
.ime { font-size: 18px; }
.clock { justify-self: end; display: flex; flex-direction: column; align-items: flex-end; line-height: 19px; font-size: 14.700px; margin-bottom: 2px; }
.badge { width: 19px; height: 19px; border-radius: 50%; background: #0067c0; color: #fff; font-size: 12px; line-height: 19px; text-align: center; }
```
